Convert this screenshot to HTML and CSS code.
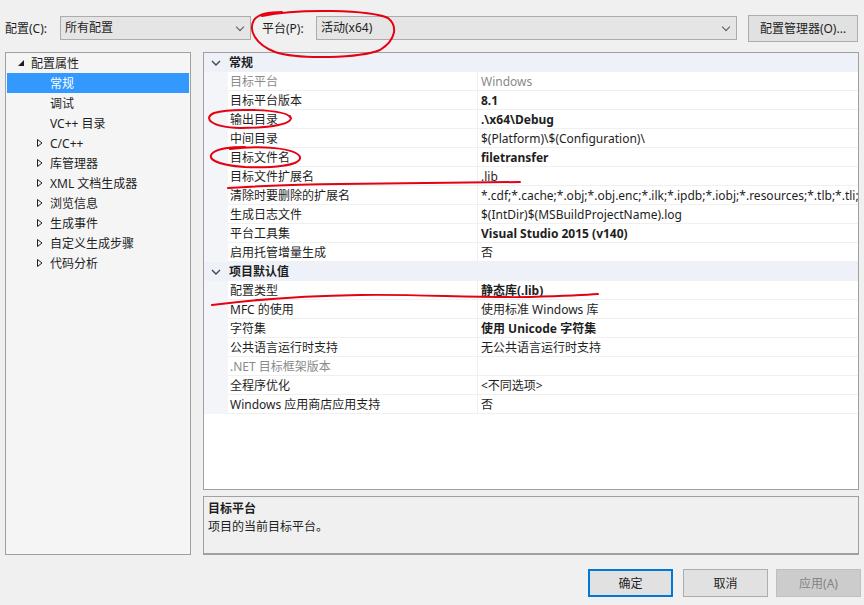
FILE: index.html
```html
<!DOCTYPE html>
<html lang="zh-CN">
<head>
    <meta charset="UTF-8">
    <title>属性页</title>
    <link rel="stylesheet" href="styles.css">
</head>
<body>

    <div class="top-bar">
        <span class="label label-config">配置(C):</span>
        <div class="combo combo-config">所有配置<span class="chev"></span></div>
        <span class="label label-platform">平台(P):</span>
        <div class="combo combo-platform">活动(x64)<span class="chev"></span></div>
        <button class="btn btn-manager">配置管理器(O)...</button>
    </div>

    <div class="main">
        <div class="tree">
            <div class="tree-item lvl0">
                <svg class="arrow" width="8" height="8" viewBox="0 0 8 8"><polygon points="7,1 7,7 1,7" fill="#1e1e1e"/></svg>
                配置属性
            </div>
            <div class="tree-item lvl1 selected">常规</div>
            <div class="tree-item lvl1">调试</div>
            <div class="tree-item lvl1">VC++ 目录</div>
            <div class="tree-item lvl1"><svg class="arrow" width="8" height="10" viewBox="0 0 8 10"><polygon points="1.5,1.5 6,5 1.5,8.5" fill="none" stroke="#1e1e1e"/></svg>C/C++</div>
            <div class="tree-item lvl1"><svg class="arrow" width="8" height="10" viewBox="0 0 8 10"><polygon points="1.5,1.5 6,5 1.5,8.5" fill="none" stroke="#1e1e1e"/></svg>库管理器</div>
            <div class="tree-item lvl1"><svg class="arrow" width="8" height="10" viewBox="0 0 8 10"><polygon points="1.5,1.5 6,5 1.5,8.5" fill="none" stroke="#1e1e1e"/></svg>XML 文档生成器</div>
            <div class="tree-item lvl1"><svg class="arrow" width="8" height="10" viewBox="0 0 8 10"><polygon points="1.5,1.5 6,5 1.5,8.5" fill="none" stroke="#1e1e1e"/></svg>浏览信息</div>
            <div class="tree-item lvl1"><svg class="arrow" width="8" height="10" viewBox="0 0 8 10"><polygon points="1.5,1.5 6,5 1.5,8.5" fill="none" stroke="#1e1e1e"/></svg>生成事件</div>
            <div class="tree-item lvl1"><svg class="arrow" width="8" height="10" viewBox="0 0 8 10"><polygon points="1.5,1.5 6,5 1.5,8.5" fill="none" stroke="#1e1e1e"/></svg>自定义生成步骤</div>
            <div class="tree-item lvl1"><svg class="arrow" width="8" height="10" viewBox="0 0 8 10"><polygon points="1.5,1.5 6,5 1.5,8.5" fill="none" stroke="#1e1e1e"/></svg>代码分析</div>
        </div>

        <div class="right">
            <div class="grid">
                <div class="cat">
                    <svg class="cat-chev" width="10" height="6" viewBox="0 0 10 6"><polyline points="1,1 5,5 9,1" fill="none" stroke="#444" stroke-width="1.4"/></svg>
                    常规
                </div>
                <div class="prop"><span class="name dim">目标平台</span><span class="value dim">Windows</span></div>
                <div class="prop"><span class="name">目标平台版本</span><span class="value bold">8.1</span></div>
                <div class="prop"><span class="name">输出目录</span><span class="value bold">.\x64\Debug</span></div>
                <div class="prop"><span class="name">中间目录</span><span class="value">$(Platform)\$(Configuration)\</span></div>
                <div class="prop"><span class="name">目标文件名</span><span class="value bold">filetransfer</span></div>
                <div class="prop"><span class="name">目标文件扩展名</span><span class="value">.lib</span></div>
                <div class="prop"><span class="name">清除时要删除的扩展名</span><span class="value">*.cdf;*.cache;*.obj;*.obj.enc;*.ilk;*.ipdb;*.iobj;*.resources;*.tlb;*.tli;*.t</span></div>
                <div class="prop"><span class="name">生成日志文件</span><span class="value">$(IntDir)$(MSBuildProjectName).log</span></div>
                <div class="prop"><span class="name">平台工具集</span><span class="value bold">Visual Studio 2015 (v140)</span></div>
                <div class="prop"><span class="name">启用托管增量生成</span><span class="value">否</span></div>
                <div class="cat">
                    <svg class="cat-chev" width="10" height="6" viewBox="0 0 10 6"><polyline points="1,1 5,5 9,1" fill="none" stroke="#444" stroke-width="1.4"/></svg>
                    项目默认值
                </div>
                <div class="prop"><span class="name">配置类型</span><span class="value bold">静态库(.lib)</span></div>
                <div class="prop"><span class="name">MFC 的使用</span><span class="value">使用标准 Windows 库</span></div>
                <div class="prop"><span class="name">字符集</span><span class="value bold">使用 Unicode 字符集</span></div>
                <div class="prop"><span class="name">公共语言运行时支持</span><span class="value">无公共语言运行时支持</span></div>
                <div class="prop"><span class="name dim">.NET 目标框架版本</span><span class="value"></span></div>
                <div class="prop"><span class="name">全程序优化</span><span class="value">&lt;不同选项&gt;</span></div>
                <div class="prop"><span class="name">Windows 应用商店应用支持</span><span class="value">否</span></div>
            </div>

            <div class="desc">
                <div class="desc-title">目标平台</div>
                <div class="desc-text">项目的当前目标平台。</div>
            </div>
        </div>
    </div>

    <div class="bottom-bar">
        <button class="btn btn-ok">确定</button>
        <button class="btn">取消</button>
        <button class="btn btn-disabled">应用(A)</button>
    </div>

    <!-- red pen marks over the screenshot -->
    <svg class="marks" width="864" height="605" viewBox="0 0 864 605">
        <g fill="none" stroke="#e60012" stroke-width="2" stroke-linecap="round">
            <path d="M262,16 C300,8 370,10 388,18 C398,26 396,40 380,50 C360,58 300,60 275,52 C255,44 248,30 254,20 C258,14 268,12 282,12"/>
            <path d="M290,117 C285,109 230,108 214,113 C203,118 210,127 240,128 C270,128 296,124 290,116"/>
            <path d="M230,149 C260,145 296,148 300,157 C302,166 270,168 245,167 C215,165 205,158 214,152 C220,148 232,147 245,147"/>
            <path d="M228,188 C260,186 300,184 340,184 C420,183 480,183 520,182"/>
            <path d="M212,305 C250,300 300,296 360,295 C420,294 470,298 530,297 C560,296 585,295 598,294"/>
        </g>
    </svg>

</body>
</html>
```

FILE: styles.css
```css
body {
    margin: 0;
    width: 864px;
    height: 605px;
    background-color: #f0f0f0;
    color: #1e1e1e;
    font-family: "Noto Sans", "Noto Sans CJK SC", sans-serif;
    font-size: 12px;
    position: relative;
    overflow: hidden;
}

button {
    font-family: inherit;
    font-size: 12px;
    color: #1e1e1e;
}

/* top row with the two combos */
.top-bar {
    display: flex;
    align-items: center;
    height: 24px;
    padding: 16px 0 0 5px;
}

.label-config {
    width: 55px;
}

.label-platform {
    margin-left: 11px;
    width: 54px;
}

.combo {
    position: relative;
    box-sizing: border-box;
    height: 24px;
    line-height: 22px;
    padding-left: 4px;
    background-color: #e5e5e5;
    border: 1px solid #acacac;
}

.combo-config {
    width: 191px;
}

.combo-platform {
    width: 421px;
}

.chev {
    position: absolute;
    right: 7px;
    top: 7px;
    width: 5px;
    height: 5px;
    border-right: 1px solid #555;
    border-bottom: 1px solid #555;
    transform: rotate(45deg);
}

.btn {
    box-sizing: border-box;
    width: 85px;
    height: 28px;
    padding: 0;
    background-color: #e1e1e1;
    border: 1px solid #adadad;
}

.btn-manager {
    width: 110px;
    height: 27px;
    margin-left: 11px;
}

/* main area */
.main {
    display: flex;
    margin-top: 12px;
    padding-left: 5px;
    height: 503px;
}

.tree {
    box-sizing: border-box;
    width: 186px;
    height: 503px;
    padding: 0 1px;
    background-color: #f5f5f5;
    border: 1px solid #a0a0a0;
}

.tree-item {
    position: relative;
    height: 20px;
    line-height: 21px;
    white-space: nowrap;
}

.tree-item.lvl0 {
    padding-left: 24px;
}

.tree-item.lvl1 {
    padding-left: 43px;
}

.tree-item .arrow {
    position: absolute;
    top: 5px;
}

.lvl0 .arrow {
    left: 10px;
    top: 6px;
}

.lvl1 .arrow {
    left: 29px;
}

.tree-item.selected {
    background-color: #3399ff;
    color: #ffffff;
}

.right {
    display: flex;
    flex-direction: column;
    margin-left: 12px;
    width: 656px;
}

.grid {
    box-sizing: border-box;
    height: 438px;
    background-color: #ffffff;
    border: 1px solid #a0a0a0;
    overflow: hidden;
}

.cat {
    position: relative;
    height: 19px;
    line-height: 19px;
    padding-left: 25px;
    font-weight: bold;
    background-color: #eef2f8;
}

.cat-chev {
    position: absolute;
    left: 7px;
    top: 7px;
}

.prop {
    display: grid;
    grid-template-columns: 250px 1fr;
    height: 19px;
    margin-left: 24px;
    border-bottom: 1px solid #f0f0f0;
    box-sizing: border-box;
    position: relative;
}

.prop::before {
    content: "";
    position: absolute;
    left: -24px;
    top: 0;
    width: 24px;
    height: 19px;
    background-color: #f3f5f9;
}

.name,
.value {
    height: 18px;
    line-height: 20px;
    white-space: nowrap;
    overflow: hidden;
}

.name {
    padding-left: 2px;
    border-right: 1px solid #f0f0f0;
}

.value {
    padding-left: 3px;
}

.dim {
    color: #8a8a8a;
}

.bold {
    font-weight: bold;
}

.desc {
    box-sizing: border-box;
    height: 59px;
    margin-top: 6px;
    padding: 3px 4px 2px;
    border: 1px solid #a0a0a0;
    border-bottom: 2px solid #a0a0a0;
    line-height: 18px;
}

.desc-title {
    font-weight: bold;
}

/* dialog buttons */
.bottom-bar {
    display: flex;
    gap: 10px;
    padding: 14px 0 0 588px;
}

.btn-ok {
    border: 2px solid #0078d7;
}

.btn-disabled {
    margin-left: -2px;
    background-color: #cccccc;
    border-color: #bfbfbf;
    color: #838383;
}

/* annotation pen strokes */
.marks {
    position: absolute;
    left: 0;
    top: 0;
    pointer-events: none;
}
```
